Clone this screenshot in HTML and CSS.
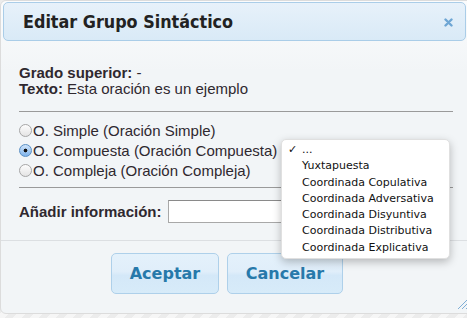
FILE: index.html
```html
<!DOCTYPE html>
<html lang="es">
<head>
    <meta charset="UTF-8" />
    <title>Editar Grupo Sintáctico</title>
    <link rel="stylesheet" href="styles.css">
</head>
<body>
    <div class="dialog">
        <div class="titlebar">
            <span class="title">Editar Grupo Sintáctico</span>
            <a class="close" href="#">
                <svg width="9" height="9" viewBox="0 0 9 9"><path d="M1.5 1.5 L7.5 7.5 M7.5 1.5 L1.5 7.5" stroke="#6ea6d4" stroke-width="2.4" stroke-linecap="round"/></svg>
            </a>
        </div>

        <div class="content">
            <div class="info">
                <div><b>Grado superior:</b> -</div>
                <div><b>Texto:</b> Esta oración es un ejemplo</div>
            </div>
            <div class="rule"></div>

            <!-- tipo de oración -->
            <div class="options">
                <label class="option"><span class="radio"></span>O. Simple (Oración Simple)</label>
                <label class="option"><span class="radio checked"></span>O. Compuesta (Oración Compuesta)</label>
                <label class="option"><span class="radio"></span>O. Compleja (Oración Compleja)</label>
            </div>
            <div class="rule short"></div>

            <div class="add-row">
                <label>Añadir información:</label>
                <input type="text" class="add-input">
            </div>
        </div>

        <div class="buttonpane">
            <button class="btn">Aceptar</button>
            <button class="btn">Cancelar</button>
        </div>

        <svg class="grip" width="12" height="12" viewBox="0 0 12 12">
            <path d="M11 2 L2 11 M11 6 L6 11 M11 10 L10 11" stroke="#7faed6" stroke-width="1"/>
        </svg>

        <!-- menú desplegable abierto -->
        <ul class="menu">
            <li class="selected"><span class="check">✓</span>...</li>
            <li>Yuxtapuesta</li>
            <li>Coordinada Copulativa</li>
            <li>Coordinada Adversativa</li>
            <li>Coordinada Disyuntiva</li>
            <li>Coordinada Distributiva</li>
            <li>Coordinada Explicativa</li>
        </ul>
    </div>
</body>
</html>
```

FILE: styles.css
```css
body {
    margin: 0;
    padding: 0;
    height: 318px;
    overflow: hidden;
    background: repeating-linear-gradient(135deg, #ececec 0, #ececec 6px, #f6f6f6 6px, #f6f6f6 12px);
}
.dialog {
    position: relative;
    box-sizing: border-box;
    width: 474px;
    height: 314px;
    padding: 1px 3px 0 2px;
    border: 1px solid #dcdcdc;
    border-radius: 6px;
    background: linear-gradient(#fbfcfd, #f2f5f7 70px);
    font-family: "Liberation Sans", Arial, sans-serif;
    font-size: 15px;
    color: #2f282f;
}
.titlebar {
    box-sizing: border-box;
    width: 463px;
    height: 39px;
    display: flex;
    justify-content: space-between;
    align-items: center;
    padding: 0 12px 0 19px;
    border: 1px solid #aacde8;
    border-radius: 5px;
    background: linear-gradient(#e7f1fa, #d9eaf7);
}
.title {
    font-family: "DejaVu Sans", sans-serif;
    font-stretch: condensed;
    font-weight: bold;
    font-size: 17.8px;
    color: #222;
}
.close {
    display: flex;
    padding-top: 1px;
}
.content {
    padding: 24px 17px 0 16px;
}
.info {
    line-height: 16px;
}
.rule {
    margin-top: 14px;
    border-top: 1px solid #9a9a9a;
}
.rule.short {
    margin-top: 7px;
}
.options {
    margin-top: 8px;
}
.option {
    display: flex;
    align-items: center;
    height: 20px;
}
.radio {
    box-sizing: border-box;
    width: 13px;
    height: 13px;
    margin-right: 1px;
    border: 1px solid #a6a6a6;
    border-radius: 50%;
    background: linear-gradient(#fdfdfd, #e4e4e4);
}
.radio.checked {
    border-color: #5a8fc4;
    background: radial-gradient(circle, #111 0, #111 1.6px, transparent 2.2px), linear-gradient(#cfe4fb, #7fb3ea);
}
.add-row {
    display: flex;
    align-items: center;
    gap: 6px;
    margin-top: 12px;
}
.add-row label {
    font-weight: bold;
}
.add-input {
    box-sizing: border-box;
    width: 200px;
    height: 23px;
    margin: 0;
    border: 1px solid #a8a8a8;
    border-top-color: #8a8a8a;
    background: #fff;
}
.buttonpane {
    display: flex;
    gap: 8px;
    margin: 17px -3px 0 -2px;
    padding: 12px 0 0 110px;
    border-top: 1px solid #dcdfe2;
}
.btn {
    box-sizing: border-box;
    width: 108px;
    height: 41px;
    border: 1px solid #aed0ea;
    border-radius: 5px;
    background: linear-gradient(#e4f1fb, #e0eefa 45%, #d4e8f8 55%, #d7ebf9);
    font-family: "DejaVu Sans", sans-serif;
    font-weight: bold;
    font-size: 16px;
    color: #2779aa;
    cursor: pointer;
}
.btn + .btn {
    width: 116px;
}
.grip {
    position: absolute;
    right: 5px;
    bottom: 3px;
}
.menu {
    position: absolute;
    left: 280px;
    top: 138px;
    box-sizing: border-box;
    width: 169px;
    height: 120px;
    margin: 0;
    padding: 2px 0 0 0;
    list-style: none;
    background: #fff;
    border: 1px solid #e0e0e0;
    border-radius: 5px;
    box-shadow: 0 3px 9px rgba(0, 0, 0, 0.25);
    font-family: "DejaVu Sans", sans-serif;
    font-size: 11px;
    color: #111;
}
.menu li {
    height: 16.3px;
    line-height: 16px;
    padding-left: 20px;
    position: relative;
}
.check {
    position: absolute;
    left: 6px;
    font-size: 11px;
    font-weight: bold;
}
```
